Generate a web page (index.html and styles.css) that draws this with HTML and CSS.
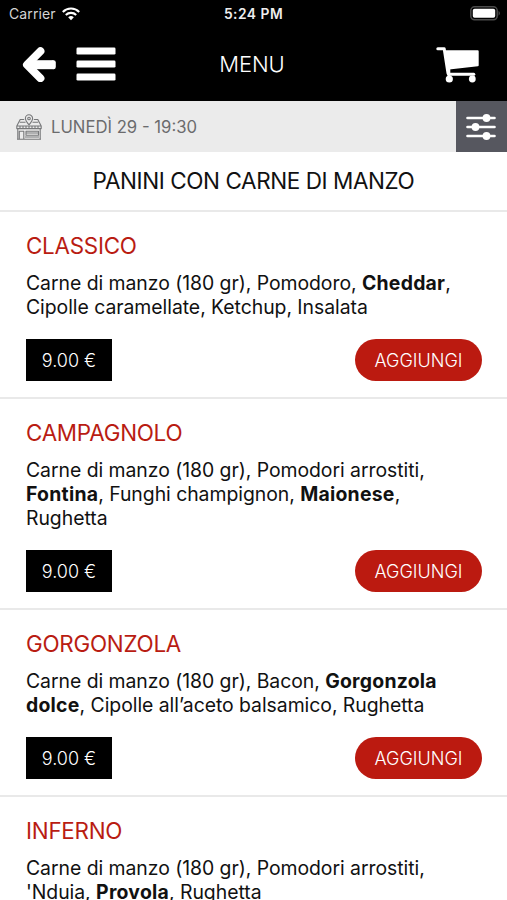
FILE: index.html
```html
<!DOCTYPE html>
<html lang="it">
<head>
<meta charset="utf-8">
<meta name="viewport" content="width=device-width">
<title>Menu</title>
<link rel="stylesheet" href="styles.css">
</head>
<body>
<header class="top">
  <div class="status">
    <div class="status-left"><span class="carrier">Carrier</span>
      <svg class="wifi" viewBox="0 0 18 14" width="18" height="14" fill="none" stroke="#fff" stroke-width="2.1"><path d="M.8 4.9C5.4.4 12.6.4 17.2 4.9M3.8 8C6.7 5.2 11.3 5.2 14.2 8"/><path d="M6.2 10.3Q9 7.8 11.8 10.3L9 13.2Z" fill="#fff" stroke="none"/></svg>
    </div>
    <span class="time">5:24 PM</span>
    <svg class="battery" viewBox="0 0 31 15" width="31" height="15"><rect x=".8" y=".8" width="26.4" height="13" rx="3.8" fill="none" stroke="#4b4b4b" stroke-width="1.5"/><rect x="2.8" y="2.8" width="22.4" height="9" rx="1.8" fill="#fff"/><path d="M28.6 4.8Q31 7.3 28.6 9.8Z" fill="#555"/></svg>
  </div>
  <nav class="nav">
    <div class="nav-left">
      <svg viewBox="0 0 34 36" width="34" height="36" fill="none" stroke="#fff" stroke-linejoin="round"><path d="M18.4 5.2 5 18.7 18.4 32.2" stroke-width="8" stroke-linecap="round"/><path d="M8 18.7H31.5" stroke-width="9"/><path d="M31.5 16.5V20.9" stroke-width="4.6" stroke-linecap="round"/></svg>
      <svg viewBox="0 0 40 34" width="40" height="34" fill="#fff"><rect x=".5" y=".6" width="39" height="7" rx="1.3"/><rect x=".5" y="13.6" width="39" height="7" rx="1.3"/><rect x=".5" y="26.6" width="39" height="7" rx="1.3"/></svg>
    </div>
    <h1>MENU</h1>
    <svg class="cart" viewBox="0 0 44 38" width="44" height="38" fill="none" stroke="#fff" stroke-linecap="round" stroke-linejoin="round"><path d="M1.8 3.7H8.2L12 28.3" stroke-width="3"/><path d="M10 6.2H41.7V20.3L13 23.6Z" fill="#fff" stroke-width="2"/><path d="M12.5 29.3H37.8" stroke-width="3"/><path d="M13 24V32" stroke-width="2.6"/><circle cx="13.3" cy="34" r="3.6" fill="#fff" stroke="none"/><circle cx="36.3" cy="34" r="3.4" fill="#fff" stroke="none"/></svg>
  </nav>
</header>
<div class="slot">
  <div class="slot-info">
    <svg viewBox="0 0 26 26" width="26" height="26" fill="none" stroke="#77787a" stroke-width="1.1" stroke-linejoin="round"><path d="M8.2 5.5H4.2L.8 12V14.6H25.2V12L21.8 5.5H17.8M3.8 8.2H9.5M16.5 8.2H22.2M.8 12H25.2"/><path d="M13 10.8C10.5 7.8 9.4 6.3 9.4 4.4A3.6 3.6 0 0 1 16.6 4.4C16.6 6.3 15.5 7.8 13 10.8Z"/><circle cx="13" cy="4.5" r="1.3"/><path d="M4 12V14.6M7 12V14.6M10 12V14.6M13 12V14.6M16 12V14.6M19 12V14.6M22 12V14.6M1.8 14.8V25.2H24.2V14.8M1 25.2H25M3.3 25V17.2H7.8V25M10 17.2H22.5V21.2H10ZM9 23H23M10 19H22"/></svg>
    <span>LUNEDÌ 29 - 19:30</span>
  </div>
  <div class="filter"><svg viewBox="0 0 30 26" width="30" height="26" fill="#fff" stroke="#fff" stroke-width="2.6" stroke-linecap="round"><path d="M1.5 4H28.5M1.5 13H28.5M1.5 22H28.5"/><g stroke="none"><circle cx="20.5" cy="4" r="3.9"/><circle cx="9.5" cy="13" r="3.9"/><circle cx="20.5" cy="22" r="3.9"/></g></svg></div>
</div>
<h2 class="category"><span>PANINI CON CARNE DI MANZO</span></h2>
<main>
  <article class="item">
    <h3>CLASSICO</h3>
    <p>Carne di manzo (180 gr), Pomodoro, <b>Cheddar</b>,<br>Cipolle caramellate, Ketchup, Insalata</p>
    <div class="actions"><span class="price">9.00 €</span><button class="add">AGGIUNGI</button></div>
  </article>
  <article class="item">
    <h3>CAMPAGNOLO</h3>
    <p>Carne di manzo (180 gr), Pomodori arrostiti,<br><b>Fontina</b>, Funghi champignon, <b>Maionese</b>,<br>Rughetta</p>
    <div class="actions"><span class="price">9.00 €</span><button class="add">AGGIUNGI</button></div>
  </article>
  <article class="item">
    <h3>GORGONZOLA</h3>
    <p>Carne di manzo (180 gr), Bacon, <b>Gorgonzola<br>dolce</b>, Cipolle all’aceto balsamico, Rughetta</p>
    <div class="actions"><span class="price">9.00 €</span><button class="add">AGGIUNGI</button></div>
  </article>
  <article class="item">
    <h3>INFERNO</h3>
    <p>Carne di manzo (180 gr), Pomodori arrostiti,<br>'Nduia, <b>Provola</b>, Rughetta</p>
  </article>
</main>
</body>
</html>
```
FILE: styles.css
```css
* { box-sizing: border-box; }
body {
  margin: 0;
  height: 900px;
  overflow: hidden;
  background: #fff;
  color: #111;
  font-family: Inter, "Liberation Sans", sans-serif;
}
svg { display: block; flex: none; }
h1, h2, h3, p { margin: 0; font-weight: 400; }
.top { height: 101px; background: #000; color: #fff; }
.status {
  display: grid;
  grid-template-columns: 1fr auto 1fr;
  align-items: center;
  height: 27px;
  padding: 0 6px 0 9px;
}
.status-left { display: flex; align-items: center; gap: 6px; }
.carrier { font-size: 14px; line-height: 20px; color: #d4d4d4; letter-spacing: 0.1px; }
.time { margin-right: 3px; font-size: 13.8px; line-height: 20px; font-weight: 600; color: #eee; letter-spacing: 0.5px; }
.battery { justify-self: end; }
.nav {
  display: grid;
  grid-template-columns: 1fr auto 1fr;
  align-items: center;
  height: 74px;
  padding: 0 27px 0 24px;
}
.nav-left { display: flex; align-items: center; gap: 20px; margin-left: -2px; }
.nav h1 { font-size: 22px; line-height: 30px; font-weight: 300; letter-spacing: -0.1px; }
.cart { justify-self: end; }
.slot { display: flex; height: 51px; background: #ebebeb; }
.slot-info {
  display: flex;
  align-items: center;
  gap: 9px;
  flex: 1;
  padding-left: 16px;
  color: #6b6b6d;
  font-size: 16.7px;
}
.filter {
  display: flex;
  align-items: center;
  justify-content: center;
  width: 51px;
  padding-right: 2px;
  background: #56575f;
}
.category {
  height: 60px;
  border-bottom: 2px solid #e9e9e9;
  text-align: center;
  font-size: 22.5px;
  line-height: 58px;
  letter-spacing: -0.42px;
}
.item { padding: 19px 25px 16px 26px; border-bottom: 2px solid #e9e9e9; }
.item h3 { font-size: 22.4px; line-height: 30px; letter-spacing: -0.25px; color: #b91c12; }
.item p { margin-top: 10px; font-size: 19.4px; line-height: 24px; letter-spacing: -0.04px; white-space: nowrap; }
.item b { font-weight: 700; letter-spacing: 0.25px; }
.actions { display: flex; justify-content: space-between; margin-top: 20px; }
.price, .add {
  display: flex;
  align-items: center;
  justify-content: center;
  height: 42px;
  color: #fff;
  font: 300 18px Inter, "Liberation Sans", sans-serif;
}
.price { width: 86px; background: #000; }
.add { width: 127px; padding: 0; border: 0; border-radius: 21px; background: #bb1a10; }
```
